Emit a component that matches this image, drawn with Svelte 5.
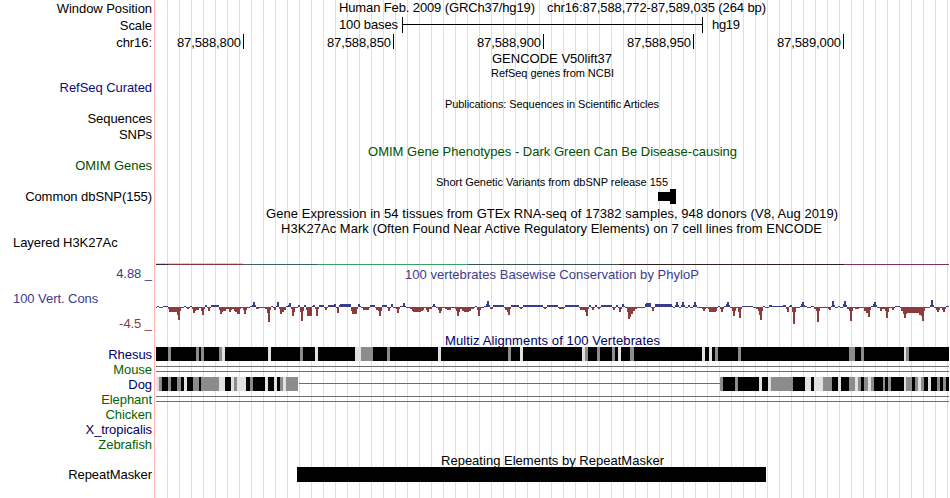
<script>
  const LEFT = 155;
  const WIDTH = 795;

  const ticks = [
    { x: 243, text: "87,588,800" },
    { x: 393, text: "87,588,850" },
    { x: 543, text: "87,588,900" },
    { x: 693, text: "87,588,950" },
    { x: 843, text: "87,589,000" },
  ];

  // steps of "position:height", three position units per pixel
  const phyloP = [
    {
      start: 150,
      end: 780,
      steps:
        "18:-1 21:1 27:-1 39:1 54:-2 57:-5 81:-8 84:-13 90:-4 93:-1 102:1 108:-1 111:-2 117:-1 120:1 126:-2 130:-6 135:-4 138:-3 147:-1 153:-4 156:-8 162:-2 165:2 171:-1 174:-4 180:-1 183:2 207:-3 210:-7 216:-5 219:-4 228:-2 237:-5 243:-3 246:-2 252:-4 255:-5 261:-7 270:-2 273:-1 279:-3 282:-7 288:-3 291:-1 300:1 306:2 309:5 315:2 318:-2 327:-1 345:-2 351:-6 354:-15 360:-3 363:1 369:-1 372:-3 378:1 381:5 387:-2 390:-7 396:-5 402:-3 408:1 414:2 417:4 423:-2 426:-9 432:-5 435:-1 444:2 450:-5 453:-14 459:-4 462:2 468:-3 471:-9 486:1 489:2 495:-2 498:-9 504:-2 507:2 522:-1 525:-3 531:-1 534:2 552:3 558:-1 561:-6 567:2 570:3 603:-4 606:-7 621:-2 624:3 630:1 633:-1 639:-3 657:-1 660:2 675:-1 678:-3 684:-4 687:-9 693:-4 696:2 711:-1 714:-4 720:-1 723:3 729:-1 738:-2 741:-6 747:-2 750:1 759:4 765:1 768:-1",
    },
    {
      start: 410,
      end: 780,
      steps:
        "0:-2 6:-4 9:-5 33:-4 39:-3 42:-1 48:-3 51:-5 57:-2 66:1 69:3 75:1 78:-1 84:-3 87:-6 93:-4 96:-1 105:-2 111:-3 123:-1 135:-2 138:-4 141:-9 147:-5 150:-2 156:-4 162:-5 177:-4 183:-2 192:-1 195:1 201:-3 204:-9 210:-3 213:-1 222:1 228:3 231:6 237:2 240:-2 249:2 282:-1 285:-3 291:-5 294:-8 300:-2 303:2 327:-1 330:-2 336:-1 339:2 399:-1 402:-2 408:-1 411:2 444:-1 447:-2 462:-1 465:2 507:-1 510:-3 525:-5 528:-9 534:-2 537:2 543:-1 546:-3 552:-1 555:2 561:-1 564:-2 570:-1 573:2 606:-1 609:-3 615:-1 618:2 624:-1 627:-5 633:-2 636:3 642:1 645:-1 651:-5 654:-12 660:-10 663:-7 669:-4 675:-2 681:-1 705:3 708:4 723:-1 726:-4 732:-1 735:3",
    },
    {
      start: 670,
      end: 837,
      steps:
        "0:3 6:1 9:-1 15:2 18:5 24:2 27:-1 33:2 36:5 42:2 45:-1 54:2 60:-1 69:2 72:5 78:2 81:-1 96:-2 99:-4 105:-2 108:-1 114:-2 117:-5 138:-4 141:-1 144:1 150:-2 153:-5 159:-2 162:1 168:3 171:5 177:2 180:-1 186:-4 189:-9 195:-4 198:-1 204:-5 207:-11 213:-2 216:1 249:-1 258:-2 264:-4 267:-8 270:-13 276:-4 279:1 285:-1 297:2 306:1 339:2 348:-2 351:-5 357:1 360:2 366:-5 369:-17 375:-5 378:-1 390:1 393:3 396:5 402:2 405:1 411:-1 423:1 432:-2 438:-4 441:-15 447:-4 450:-1 474:-2 477:-3 483:1 486:6 492:2 495:-1 504:1 510:-1 519:3 522:6 528:2 531:-2 537:-4 540:-14 546:-4 549:-1 555:-2 567:-1 582:-4 588:-6 594:-10 600:-3 603:1 609:3 612:5 618:2 621:-1 630:-4 636:-2 645:-4 648:-11 654:-5 657:-1 666:-3 672:-1 675:1 690:-1 693:-4 699:-7 702:-11 708:-7 711:-6 747:-8 753:-9 756:-14 762:-4 765:-1 780:2 783:7 789:2 792:-1 798:-3 801:-5 807:-3 810:-1 816:-3 819:-5 825:-2 828:1",
    },
  ];

  const conservation = phyloP.flatMap(({ start, end, steps }) => {
    const points = steps.split(" ").map((s) => s.split(":").map(Number));
    return points.map(([pos, h], i) => {
      const next = i + 1 < points.length ? points[i + 1][0] : end;
      return { x: start + Math.round(pos / 3), w: Math.round(next / 3) - Math.round(pos / 3), h };
    });
  });

  // k = identical, g = weaker match, l = mismatch
  function blocks(start, first, runs) {
    let pos = first;
    return runs.split(" ").map((run) => {
      const end = Number(run.slice(1));
      const block = { x: start + pos / 3, w: (end - pos) / 3, shade: run[0] };
      pos = end;
      return block;
    });
  }

  const rhesus = [
    ...blocks(150, 18, "k54 g63 k138 g147 k153 g162 k207 g216 l225 k354 l363 k450 g459 k495 l504 k570"),
    ...blocks(340, 0, "k45 l63 g99 k141 g150 k294 l303 k504 g513 k540 l549 k600"),
    ...blocks(540, 0, "k126 l135 g144 k171 g180 k216 g225 k234 l243 k270 g282 k486 l495 k507 l516 k525 g534 k540"),
    ...blocks(720, 0, "k54 g63 k387 g405 k423 g432 k552 l558 g567 k687"),
  ];
  const dog = [
    ...blocks(150, 18, "l27 g36 k54 g63 k81 g93 k102 l111 k129 g147 k153 g207 l225 k243 l252 g261 l288 k300 g309 k345 l354 k372 l381 k390 g399 l408 g444"),
    ...blocks(720, 0, "g9 k45 g54 k117 l126 k144 l153 g219 k255 l273 k282 l309 g336 k354 l363 k387 g405 l414 g423 k432 g444 l453 g462 k489 g495 k504 g513 k552 l558 g576 k585 g594 l603 g612 k624 l633 k651 g660 k669 g678 k687"),
  ];

  const h3k27ac = [
    { x: 156, w: 12, color: "#2c2c3c" },
    { x: 168, w: 75, color: "#8b323c" },
    { x: 243, w: 75, color: "#3c6464" },
    { x: 318, w: 150, color: "#37a064" },
    { x: 468, w: 151, color: "#37504b" },
    { x: 619, w: 225, color: "#32201e" },
    { x: 844, w: 105, color: "#7d3264" },
  ];

  const rows = [
    { height: 17, label: "Window Position", kind: "position" },
    { height: 17, label: "Scale", kind: "scale" },
    { height: 17, label: "chr16:", kind: "ruler" },
    { height: 15, title: "GENCODE V50lift37", y: 12, x: 492, w: 120 },
    { height: 14, title: "RefSeq genes from NCBI", y: 11, x: 491, w: 123, small: true },
    { height: 15, label: "RefSeq Curated", tone: "navy" },
    { height: 16, title: "Publications: Sequences in Scientific Articles", y: 13, x: 445, w: 214, small: true },
    { height: 15, label: "Sequences" },
    { height: 17, label: "SNPs" },
    { height: 15, title: "OMIM Gene Phenotypes - Dark Green Can Be Disease-causing", y: 13, x: 368, w: 369, tone: "green" },
    { height: 15, label: "OMIM Genes", tone: "green" },
    { height: 16, title: "Short Genetic Variants from dbSNP release 155", y: 13, x: 436, w: 232, small: true },
    { height: 15, label: "Common dbSNP(155)", kind: "snp" },
    { height: 17, title: "Gene Expression in 54 tissues from GTEx RNA-seq of 17382 samples, 948 donors (V8, Aug 2019)", y: 14, x: 266, w: 572 },
    { height: 14, title: "H3K27Ac Mark (Often Found Near Active Regulatory Elements) on 7 cell lines from ENCODE", y: 12, x: 281, w: 541 },
    { height: 31, label: "Layered H3K27Ac", kind: "h3k27ac", left: true },
    { height: 65, title: "100 vertebrates Basewise Conservation by PhyloP", y: 13, x: 405, w: 294, tone: "blue", kind: "phylop" },
    { height: 16, title: "Multiz Alignments of 100 Vertebrates", y: 14, x: 445, w: 215, tone: "dark" },
    { height: 15, label: "Rhesus", tone: "dark", blocks: rhesus },
    { height: 15, label: "Mouse", tone: "forest", kind: "gap" },
    { height: 15, label: "Dog", tone: "dark", blocks: dog, kind: "dog" },
    { height: 15, label: "Elephant", tone: "forest", kind: "gap" },
    { height: 15, label: "Chicken", tone: "forest" },
    { height: 15, label: "X_tropicalis", tone: "dark" },
    { height: 15, label: "Zebrafish", tone: "forest" },
    { height: 15, title: "Repeating Elements by RepeatMasker", y: 13, x: 441, w: 223 },
    { height: 31, label: "RepeatMasker", kind: "repeat" },
  ];
</script>

<div class="browser">
  {#each rows as row}
    <div class="row">
      {#if row.kind === "phylop"}
        <div class="label range blue">
          <span>4.88 _</span>
          <span class="left">100 Vert. Cons</span>
          <span class="red">-4.5 _</span>
        </div>
      {:else}
        <div class="label {row.tone ?? ''}" class:tall={row.height === 17} class:left={row.left}>
          {row.label ?? ""}
        </div>
      {/if}
      <svg class="track" width={WIDTH} height={row.height} viewBox="{LEFT} 0 {WIDTH} {row.height}">
        {#if row.kind === "position"}
          <text x="339" y="12" textLength="196">Human Feb. 2009 (GRCh37/hg19)</text>
          <text x="547" y="12" textLength="219">chr16:87,588,772-87,589,035 (264 bp)</text>
        {:else if row.kind === "scale"}
          <text x="339" y="12" textLength="59">100 bases</text>
          <rect x="402" y="0" width="1" height="16" />
          <rect x="402" y="7" width="301" height="1" />
          <rect x="702" y="0" width="1" height="16" />
          <text x="712" y="12" textLength="28">hg19</text>
        {:else if row.kind === "ruler"}
          {#each ticks as tick}
            <text x={tick.x - 66} y="13" textLength="64">{tick.text}</text>
            <rect x={tick.x} y="0" width="1" height="15" />
          {/each}
        {:else if row.kind === "snp"}
          <rect x="658" y="3" width="12" height="9" />
          <rect x="670" y="0" width="6" height="15" />
        {:else if row.kind === "h3k27ac"}
          <rect x="156" y="28" width="87" height="1" fill="#f8c88c" />
          {#each h3k27ac as part}
            <rect x={part.x} y="29" width={part.w} height="1" fill={part.color} />
          {/each}
        {:else if row.kind === "phylop"}
          {#each conservation as bar}
            <rect
              x={bar.x}
              y={bar.h > 0 ? 41 - bar.h : 41}
              width={bar.w}
              height={Math.abs(bar.h)}
              fill={bar.h > 0 ? "#3c3c8c" : "#8c3c3c"}
            />
          {/each}
        {:else if row.kind === "gap"}
          <rect class="line" x="156" y="4" width="793" height="1" />
          <rect class="line" x="156" y="9" width="793" height="1" />
        {:else if row.kind === "dog"}
          <rect class="line" x="299" y="6" width="421" height="1" />
        {:else if row.kind === "repeat"}
          <rect x="297" y="0" width="469" height="15" />
        {/if}
        {#each row.blocks ?? [] as block}
          <rect class={block.shade} x={block.x} y="0" width={block.w} height="14" />
        {/each}
        {#if row.title}
          <text class={row.tone ?? ""} class:small={row.small} x={row.x} y={row.y} textLength={row.w}>{row.title}</text>
        {/if}
      </svg>
    </div>
  {/each}
</div>

<style>
  :global(body) {
    margin: 0;
    background: #fff;
  }

  .browser {
    width: 950px;
    height: 498px;
    overflow: hidden;
    font-family: "Liberation Sans", Arial, sans-serif;
    font-size: 13px;
    color: #000;
    /* guide line every 12px, first one at x=167 */
    background: repeating-linear-gradient(to right, #dcdcfa 0 1px, #fff 1px 12px) 167px 0 / 783px 100% no-repeat;
  }

  .row {
    display: flex;
  }

  .label {
    box-sizing: border-box;
    width: 155px;
    padding-right: 2px;
    border-right: 1px solid #ffb4b4;
    line-height: 15px;
    letter-spacing: -0.06px;
    text-align: right;
    white-space: nowrap;
  }
  .label.tall {
    line-height: 17px;
  }
  .left {
    padding-left: 13px;
    text-align: left;
  }

  .range {
    display: flex;
    flex-direction: column;
    justify-content: space-between;
  }

  .track {
    display: block;
    flex: none;
    overflow: visible;
  }

  .small {
    font-size: 11px;
  }

  .navy { color: #0c0c78; fill: #0c0c78; }
  .dark { color: #000064; fill: #000064; }
  .blue { color: #3c3c8c; fill: #3c3c8c; }
  .red { color: #8c3c3c; }
  .green { color: #005000; fill: #005000; }
  .forest { color: #006400; fill: #006400; }

  .k { fill: #000; }
  .g { fill: #8c8c8c; }
  .l { fill: #e1e1e1; }
  .line { fill: #6e6e6e; }

  rect {
    shape-rendering: crispEdges;
  }
</style>
